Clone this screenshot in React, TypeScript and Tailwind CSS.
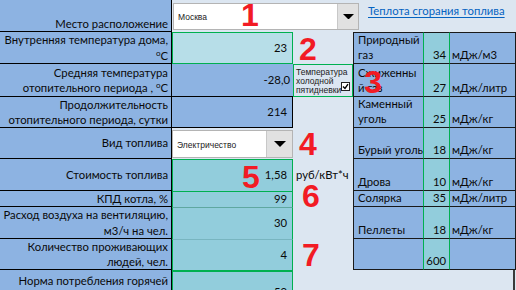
import React from 'react';

type Fuel = { name: React.ReactNode; v: string; u: string };

const fuels: Fuel[] = [
  { name: <>Природный<br />газ</>, v: '34', u: 'мДж/м3' },
  { name: <>Сжиженны<br />й газ</>, v: '27', u: 'мДж/литр' },
  { name: <>Каменный<br />уголь</>, v: '25', u: 'мДж/кг' },
  { name: 'Бурый уголь', v: '18', u: 'мДж/кг' },
  { name: 'Дрова', v: '10', u: 'мДж/кг' },
  { name: 'Солярка', v: '35', u: 'мДж/литр' },
  { name: 'Пеллеты', v: '18', u: 'мДж/кг' },
  { name: '', v: '600', u: '' },
];

const rowStart = [
  'row-start-2',
  'row-start-3',
  'row-start-4',
  'row-start-5',
  'row-start-6',
  'row-start-7',
  'row-start-8',
  'row-start-9',
];

const Deg = () => (
  <>
    <sup className="text-[8px] -top-[4px]">o</sup>C
  </>
);

function Arrow({ w }: { w: number }) {
  return (
    <svg width={w} height={w / 2} viewBox="0 0 12 6">
      <path d="M0 0 L12 0 L6 6 Z" fill="#000" />
    </svg>
  );
}

function Select({ text, className, btn, tri }: { text: string; className: string; btn: string; tri: number }) {
  return (
    <div className={`flex bg-white border border-[#B4B4B4] ${className}`}>
      <div className="flex-1 flex items-center pl-[4px] pt-[2px] text-[8.5px] font-['Liberation_Sans',sans-serif] text-[#222]">
        {text}
      </div>
      <div className={`${btn} bg-[#E1E1E1] border-l border-[#C8C8C8] flex items-center justify-center`}>
        <Arrow w={tri} />
      </div>
    </div>
  );
}

function Label({ children, className = '' }: { children: React.ReactNode; className?: string }) {
  return (
    <div
      className={`col-start-1 bg-[#8DB3E2] border-r border-b border-black flex flex-col justify-center items-end text-right whitespace-nowrap pr-[3px] leading-[15.5px] ${className}`}
    >
      <div>{children}</div>
    </div>
  );
}

function Digit({ n, className }: { n: string; className: string }) {
  return (
    <div
      className={`absolute text-[32px] leading-none font-bold text-[#F21B24] font-['Liberation_Sans',sans-serif] ${className}`}
    >
      {n}
    </div>
  );
}

export default function App() {
  return (
    <div className="relative w-[516px] h-[290px] overflow-hidden bg-[#DCE6F1] font-['Lato',sans-serif] text-[11.3px] text-[#0A0A0A]">
      <div className="grid grid-cols-[172px_121px_60px_70px_27px_66px] grid-rows-[32px_32px_33px_31px_31px_32px_16px_32px_31px_40px]">
        {/* left labels */}
        <Label className="row-start-1 !justify-end">Место расположение</Label>
        <Label className="row-start-2">
          Внутренняя температура дома,
          <br />
          <Deg />
        </Label>
        <Label className="row-start-3">
          Средняя температура
          <br />
          отопительного периода , <Deg />
        </Label>
        <Label className="row-start-4">
          Продолжительность
          <br />
          отопительного периода, сутки
        </Label>
        <Label className="row-start-5">Вид топлива</Label>
        <Label className="row-start-6">Стоимость топлива</Label>
        <Label className="row-start-7">КПД котла, %</Label>
        <Label className="row-start-8">
          Расход воздуха на вентиляцию,
          <br />
          м3/ч на чел.
        </Label>
        <Label className="row-start-9">
          Количество проживающих
          <br />
          людей, чел.
        </Label>
        <Label className="row-start-10 !justify-start pt-[3px]">Норма потребления горячей</Label>

        {/* top row: location select + link */}
        <div className="col-start-2 col-span-5 row-start-1 flex items-start">
          <Select text="Москва" className="w-[186px] h-[27px] mt-[3px] ml-px" btn="w-[21px]" tri={11} />
          <a className="ml-[9px] mt-[3px] text-[11.3px] text-[#0563C1] underline underline-offset-2 whitespace-nowrap">
            Теплота сгорания топлива
          </a>
        </div>

        {/* middle inputs */}
        <div className="col-start-2 row-start-2 bg-[#B7DEE8] border border-[#00B050] flex items-center justify-end pr-[5px]">23</div>
        <div className="col-start-2 row-start-3 bg-[#8DB3E2] border-b border-black flex items-center justify-end pr-[3px]">-28,0</div>
        <div className="relative col-start-3 row-start-3 border border-[#00B050] pl-[2px] pt-[3px] text-[8.5px] leading-[9px] font-['Liberation_Sans',sans-serif] text-[#222] whitespace-nowrap">
          Температура
          <br />
          холодной
          <br />
          пятидневки
          <div className="absolute right-[2px] top-[17px] w-[9px] h-[9px] border border-[#222] bg-white flex items-center justify-center">
            <svg width="7" height="7" viewBox="0 0 7 7">
              <path d="M1 3.5 L3 5.5 L6 1.2" stroke="#000" strokeWidth="1.4" fill="none" />
            </svg>
          </div>
        </div>
        <div className="col-start-2 row-start-4 bg-[#8DB3E2] border-r border-b border-black flex items-center justify-end pr-[5px]">214</div>
        <div className="col-start-2 row-start-5 flex items-start">
          <Select text="Электричество" className="w-[121px] h-[28px] mt-[2px]" btn="w-[26px]" tri={12} />
        </div>
        <div className="col-start-2 row-start-6 bg-[#92CDDC] border-x border-t border-[#00B050] flex items-center justify-end pr-[5px]">1,58</div>
        <div className="col-start-3 row-start-6 flex items-center pl-[3px] whitespace-nowrap">руб/кВт*ч</div>
        <div className="col-start-2 row-start-7 bg-[#92CDDC] border-x border-t border-[#00B050] flex items-center justify-end pr-[5px]">99</div>
        <div className="col-start-2 row-start-8 bg-[#92CDDC] border-x border-t border-x-[#00B050] border-t-[#5FA7A0] flex items-center justify-end pr-[5px]">30</div>
        <div className="col-start-2 row-start-9 bg-[#92CDDC] border-x border-t border-x-[#00B050] border-t-[#78B5C0] flex items-center justify-end pr-[5px]">4</div>
        <div className="col-start-2 row-start-10 bg-[#92CDDC] border-x-[1px] border-t-2 border-[#00B050] flex items-start justify-end pr-[5px] pt-[12px]">50</div>

        {/* fuel table */}
        {fuels.map((f, i) => (
          <React.Fragment key={i}>
            <div
              className={`col-start-4 ${rowStart[i]} bg-[#8DB3E2] border-l border-b border-[#1A1A1A] ${i === 0 ? 'border-t' : ''} flex items-end pl-[4px] pb-[1px] leading-[15px] whitespace-nowrap`}
            >
              <div>{f.name}</div>
            </div>
            <div
              className={`col-start-5 ${rowStart[i]} bg-[#92CDDC] border-x border-x-[#00B050] border-b border-b-[#1A1A1A] ${i === 0 ? 'border-t border-t-[#1A1A1A]' : ''} flex items-end justify-end pr-[3px] pb-[1px] leading-[15px]`}
            >
              {f.v}
            </div>
            <div
              className={`col-start-6 ${rowStart[i]} bg-[#8DB3E2] border-r border-b border-[#1A1A1A] ${i === 0 ? 'border-t' : ''} flex items-end pl-[2px] pb-[1px] leading-[15px] whitespace-nowrap`}
            >
              {f.u}
            </div>
          </React.Fragment>
        ))}
        <div className="col-start-6 row-start-10 border-r-2 border-[#3A3A3A] mr-px" />
      </div>

      {/* red step markers */}
      <Digit n="1" className="left-[241px] -top-[1px]" />
      <Digit n="2" className="left-[299px] top-[33px]" />
      <Digit n="3" className="left-[364px] top-[66px]" />
      <Digit n="4" className="left-[299px] top-[128px]" />
      <Digit n="5" className="left-[242px] top-[161px]" />
      <Digit n="6" className="left-[302px] top-[180px]" />
      <Digit n="7" className="left-[302px] top-[239px]" />
    </div>
  );
}
